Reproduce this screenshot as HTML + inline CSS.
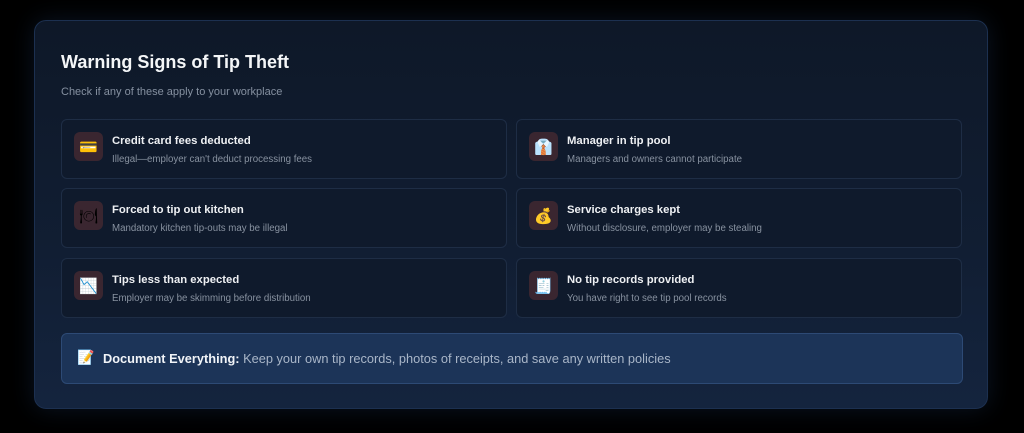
<!DOCTYPE html>
<html><head><style>
*{margin:0;padding:0;box-sizing:border-box}
body{width:1024px;height:433px;background:#000;font-family:"Liberation Sans",sans-serif;position:relative;overflow:hidden}
.panel{position:absolute;left:34px;top:20px;width:954px;height:389px;border-radius:12px;border:1px solid #1c3050;background:linear-gradient(180deg,#0e1828 0%,#111e33 60%,#14243e 100%);box-shadow:0 0 24px rgba(40,80,140,0.25)}
h1{position:absolute;left:26px;top:31px;font-size:18px;font-weight:bold;color:#f4f6f8}
.sub{position:absolute;left:26px;top:65px;font-size:11px;color:#8590a0}
.card{position:absolute;width:446px;height:60px;border:1px solid #1e2d45;border-radius:6px;background:#0f1a2c}
.ic{position:absolute;left:12px;top:12px;width:29px;height:29px;border-radius:6px;background:#3a2630;display:flex;align-items:center;justify-content:center;font-size:15px}
.t{position:absolute;left:50px;top:15px;font-size:11.3px;font-weight:bold;color:#eef0f3}
.d{position:absolute;left:50px;top:34px;font-size:9.7px;color:#8892a0}
.banner{position:absolute;left:26px;top:312px;width:902px;height:51px;border:1px solid #2d4a75;border-radius:6px;background:#1c3458;font-size:12.8px;color:#a9b6c8;padding:17px 0 0 41px}
.banner b{color:#f1f4f8}
.banner .e{position:absolute;left:15px;top:15px;font-size:14px}
</style></head><body>
<div class="panel">
<h1>Warning Signs of Tip Theft</h1>
<div class="sub">Check if any of these apply to your workplace</div>
<div class="card" style="left:26px;top:98px"><div class="ic">💳</div><div class="t">Credit card fees deducted</div><div class="d">Illegal—employer can't deduct processing fees</div></div>
<div class="card" style="left:481px;top:98px"><div class="ic">👔</div><div class="t">Manager in tip pool</div><div class="d">Managers and owners cannot participate</div></div>
<div class="card" style="left:26px;top:167px"><div class="ic">🍽</div><div class="t">Forced to tip out kitchen</div><div class="d">Mandatory kitchen tip-outs may be illegal</div></div>
<div class="card" style="left:481px;top:167px"><div class="ic">💰</div><div class="t">Service charges kept</div><div class="d">Without disclosure, employer may be stealing</div></div>
<div class="card" style="left:26px;top:237px"><div class="ic">📉</div><div class="t">Tips less than expected</div><div class="d">Employer may be skimming before distribution</div></div>
<div class="card" style="left:481px;top:237px"><div class="ic">🧾</div><div class="t">No tip records provided</div><div class="d">You have right to see tip pool records</div></div>
<div class="banner"><span class="e">📝</span><b>Document Everything:</b> Keep your own tip records, photos of receipts, and save any written policies</div>
</div>
</body></html>
